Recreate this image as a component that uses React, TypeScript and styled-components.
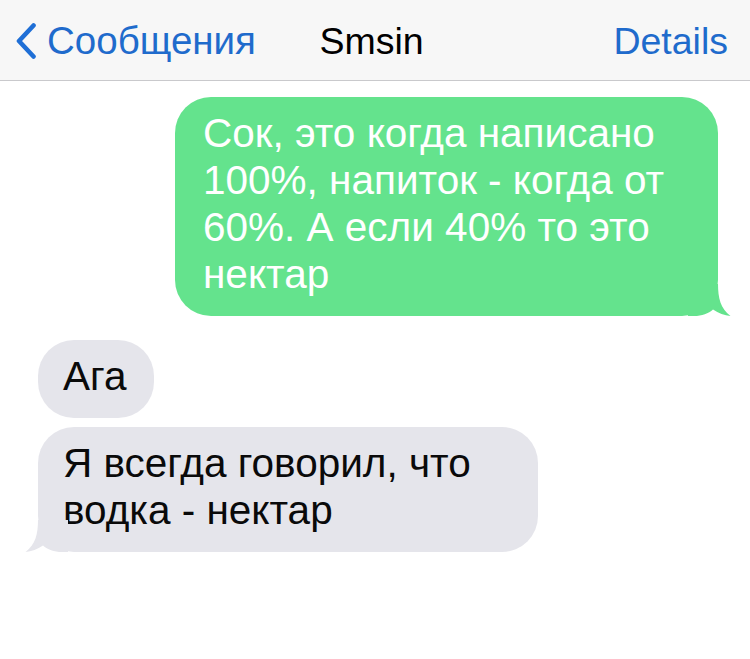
import React from "react";
import styled, { createGlobalStyle } from "styled-components";

const GlobalStyle = createGlobalStyle`
  html, body {
    margin: 0;
    padding: 0;
    background: #ffffff;
  }
  body {
    font-family: "Liberation Sans", Arial, sans-serif;
    width: 750px;
    height: 659px;
    overflow: hidden;
  }
`;

const Screen = styled.div`
  width: 750px;
  height: 659px;
  display: flex;
  flex-direction: column;
  background: #ffffff;
`;

const NavBar = styled.header`
  height: 81px;
  box-sizing: border-box;
  background: #f7f7f7;
  border-bottom: 1px solid #c9c9cc;
  display: grid;
  grid-template-columns: 1fr auto 1fr;
  align-items: center;
  padding: 1px 22px 0 15px;
  font-size: 37.5px;
  line-height: 38px;
`;

const BackButton = styled.div`
  display: flex;
  align-items: center;
  gap: 10px;
  color: #1f6bcc;
  justify-self: start;
`;

const BackLabel = styled.span`
  font-size: 38.5px;
`;

const Title = styled.div`
  color: #000;
  justify-self: center;
`;

const DetailsLink = styled.div`
  color: #1f6bcc;
  justify-self: end;
`;

const Thread = styled.main`
  display: flex;
  flex-direction: column;
  padding: 16px 32px 0 38px;
`;

const Bubble = styled.div<{ $sent?: boolean; $gap?: number; $width?: number }>`
  position: relative;
  box-sizing: border-box;
  align-self: ${(p) => (p.$sent ? "flex-end" : "flex-start")};
  width: ${(p) => (p.$width ? `${p.$width}px` : "auto")};
  margin-top: ${(p) => p.$gap ?? 0}px;
  padding: 13px 28px 18px ${(p) => (p.$sent ? 28 : 25)}px;
  border-radius: 36px;
  background: ${(p) => (p.$sent ? "#64e38d" : "#e5e5eb")};
  color: ${(p) => (p.$sent ? "#ffffff" : "#0a0a0a")};
  font-size: 40.5px;
  line-height: 47px;
  white-space: nowrap;
`;

const Tail = styled.svg<{ $sent?: boolean }>`
  position: absolute;
  bottom: 0;
  width: 44px;
  height: 32px;
  ${(p) => (p.$sent ? "right: -14px;" : "left: -14px; transform: scaleX(-1);")}
`;

function BubbleTail({ sent, color }: { sent?: boolean; color: string }) {
  return (
    <Tail $sent={sent} viewBox="0 0 44 32">
      <path
        d="M30 0 C30 14 32.5 24.5 42.5 32 C36.5 31.6 30.5 29 25 25.5 C20.5 29.5 14 32 6 32 L0 32 L0 0 Z"
        fill={color}
      />
    </Tail>
  );
}

const Chevron = () => (
  <svg width="22" height="36" viewBox="0 0 22 36">
    <path
      d="M18.5 2.5 L4 18 L18.5 33.5"
      fill="none"
      stroke="#1f6fd6"
      strokeWidth="4.6"
      strokeLinecap="round"
      strokeLinejoin="round"
    />
  </svg>
);

export default function App() {
  return (
    <>
      <GlobalStyle />
      <Screen>
        <NavBar>
          <BackButton>
            <Chevron />
            <BackLabel>Сообщения</BackLabel>
          </BackButton>
          <Title>Smsin</Title>
          <DetailsLink>Details</DetailsLink>
        </NavBar>
        <Thread>
          <Bubble $sent $width={543}>
            Сок, это когда написано
            <br />
            100%, напиток - когда от
            <br />
            60%. А если 40% то это
            <br />
            нектар
            <BubbleTail sent color="#64e38d" />
          </Bubble>
          <Bubble $gap={24}>Ага</Bubble>
          <Bubble $gap={9} $width={500}>
            Я всегда говорил, что
            <br />
            водка - нектар
            <BubbleTail color="#e5e5eb" />
          </Bubble>
        </Thread>
      </Screen>
    </>
  );
}
